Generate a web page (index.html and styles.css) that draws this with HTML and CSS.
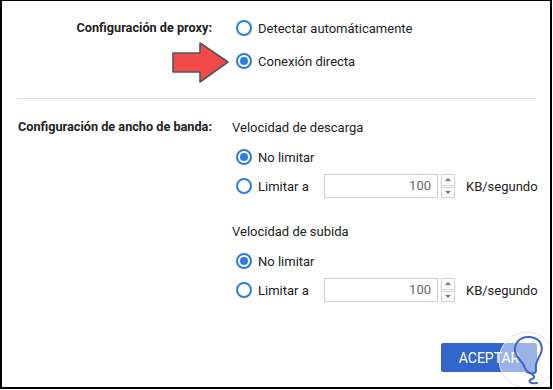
FILE: index.html
```html
<!DOCTYPE html>
<html lang="es">
<head>
<meta charset="utf-8">
<link rel="stylesheet" href="styles.css">
</head>
<body>
<div class="frame">
  <section class="group proxy">
    <div class="label">Configuración de proxy:</div>
    <div class="options">
      <div class="row"><span class="radio"></span><span>Detectar automáticamente</span></div>
      <div class="row"><span class="radio checked"></span><span>Conexión directa</span></div>
    </div>
  </section>
  <hr class="sep">
  <section class="group bandwidth">
    <div class="label">Configuración de ancho de banda:</div>
    <div class="options">
      <div class="row heading">Velocidad de descarga</div>
      <div class="row first"><span class="radio checked"></span><span>No limitar</span></div>
      <div class="row limit">
        <span class="rlabel"><span class="radio"></span><span>Limitar a</span></span>
        <span class="input">100</span>
        <span class="spin"><span class="up"></span><span class="down"></span></span>
        <span class="unit">KB/segundo</span>
      </div>
      <div class="row heading second">Velocidad de subida</div>
      <div class="row first"><span class="radio checked"></span><span>No limitar</span></div>
      <div class="row limit">
        <span class="rlabel"><span class="radio"></span><span>Limitar a</span></span>
        <span class="input">100</span>
        <span class="spin"><span class="up"></span><span class="down"></span></span>
        <span class="unit">KB/segundo</span>
      </div>
    </div>
  </section>
  <div class="footer">
    <button class="btn">ACEPTAR</button>
  </div>

  <svg class="arrow" width="60" height="44" viewBox="0 0 60 44">
    <polygon points="2,12 29,12 29,2 57,21 29,41 29,31 2,31" fill="#f24a4a" stroke="#555" stroke-width="1.6" stroke-linejoin="round"/>
  </svg>

  <svg class="mark" width="60" height="60" viewBox="0 0 60 60">
    <circle cx="30" cy="30" r="28" fill="rgba(255,255,255,0.5)" stroke="#dfe3ec" stroke-width="1"/>
    <path d="M20 26 C14 16 22 6 33 7 C44 8 48 18 42 27 C40 31 38 34 39 40 C40 45 30 44 28 38 C27 34 24 32 20 26 Z" fill="none" stroke="#3f66c4" stroke-width="2"/>
    <path d="M30 42 C36 44 40 47 35 49 C30 51 33 54 40 53" fill="none" stroke="#3f66c4" stroke-width="2" stroke-linecap="round"/>
  </svg>
</div>
</body>
</html>
```

FILE: styles.css
```css
* { box-sizing: border-box; }
html, body { margin: 0; padding: 0; background: #fff; }
body {
  font-family: Roboto, "Liberation Sans", sans-serif;
  font-size: 13px;
  color: #222;
}
.frame {
  position: relative;
  width: 552px;
  height: 389px;
  border-left: 2px solid #000;
  border-right: 2px solid #000;
  border-top: 1px solid #000;
  border-bottom: 2px solid #000;
  padding-top: 15px;
  overflow: hidden;
}
.group {
  display: grid;
  grid-template-columns: 210px 1fr;
  column-gap: 24px;
  align-items: start;
}
.label {
  text-align: right;
  font-weight: 700;
  font-size: 12.7px;
  height: 24px;
  line-height: 24px;
  color: #222;
}
.options {
  display: flex;
  flex-direction: column;
}
.proxy .options { gap: 9px; }
.row {
  display: flex;
  align-items: center;
  height: 24px;
  gap: 6px;
  white-space: nowrap;
}
.row.heading { gap: 0; margin-left: -4px; }
.row.first { margin-top: 6px; }
.row.limit { margin-top: 5px; }
.row.heading.second { margin-top: 21px; }
.radio {
  flex: none;
  width: 16px;
  height: 16px;
  border: 2px solid #2b7de0;
  border-radius: 50%;
  display: inline-flex;
  align-items: center;
  justify-content: center;
}
.radio.checked::after {
  content: "";
  width: 8px;
  height: 8px;
  border-radius: 50%;
  background: #2b7de0;
}
.rlabel {
  display: flex;
  align-items: center;
  gap: 6px;
  width: 88px;
}
.row.limit { gap: 0; }
.input {
  width: 114px;
  height: 24px;
  border: 1px solid #cfcfcf;
  text-align: right;
  padding-right: 6px;
  line-height: 22px;
  color: #666;
}
.spin {
  display: flex;
  flex-direction: column;
  gap: 1px;
  margin-left: 3px;
  width: 14px;
  height: 24px;
}
.spin span {
  flex: 1;
  border: 1px solid #d4d4d4;
  position: relative;
}
.spin .up::after,
.spin .down::after {
  content: "";
  position: absolute;
  left: 3px;
  top: 3px;
  border-left: 3px solid transparent;
  border-right: 3px solid transparent;
}
.spin .up::after { border-bottom: 3px solid #777; }
.spin .down::after { border-top: 3px solid #777; }
.unit { margin-left: 11px; }
.sep {
  border: 0;
  height: 1px;
  background: #e2e2e2;
  margin: 25px 14px 16px 15px;
}
.footer {
  display: flex;
  justify-content: flex-end;
  padding-right: 13px;
  margin-top: 41px;
}
.btn {
  width: 96px;
  height: 29px;
  border: 0;
  border-radius: 2px;
  background: #3366cc;
  color: #fff;
  font-family: Roboto, "Liberation Sans", sans-serif;
  font-size: 14px;
  padding: 0;
}
.arrow {
  position: absolute;
  left: 169px;
  top: 40px;
}
.mark {
  position: absolute;
  left: 495px;
  top: 329px;
}
```
